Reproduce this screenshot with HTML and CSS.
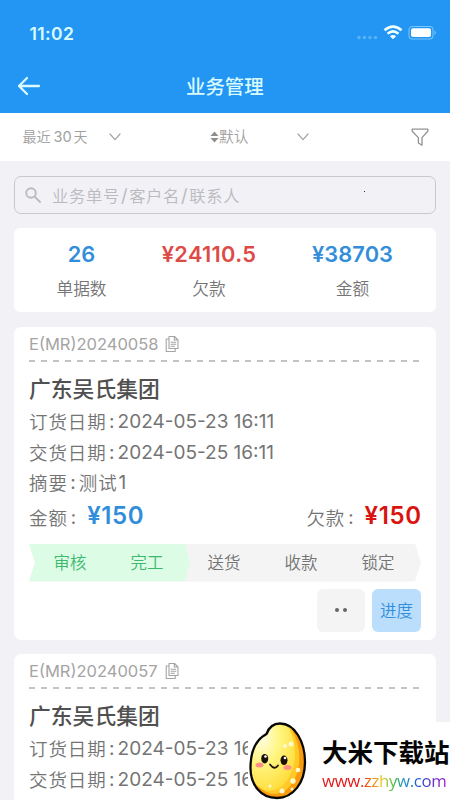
FILE: index.html
```html
<!DOCTYPE html>
<html lang="zh-CN">
<head>
<meta charset="utf-8">
<title>业务管理</title>
<link rel="stylesheet" href="styles.css">
</head>
<body>
<svg class="defs" aria-hidden="true">
  <symbol id="copy" viewBox="0 0 14 18"><path d="M4 1.500h5.500L13 5v8.500H4zM9.300 1.700V5H13M4 4H1.200v12.500h9V13.700M6 7.300h4.800M6 9.300h4.800M6 11.300h3.500"/></symbol>
  <symbol id="chevron" viewBox="0 0 12 8"><path d="M1 1l5 5.700L11 1"/></symbol>
</svg>
<header class="header">
  <div class="status">
    <span class="clock">11:02</span>
    <svg class="status-icons" viewBox="0 0 82 18">
      <g class="dots"><circle cx="4" cy="13.500" r="1.700"/><circle cx="9.500" cy="13.500" r="1.700"/><circle cx="15" cy="13.500" r="1.700"/><circle cx="20.500" cy="13.500" r="1.700"/></g>
      <g class="wifi"><path d="M29.500 6.300Q38 -1 46.500 6.300"/><path d="M32.600 9.700Q38 5.100 43.400 9.700"/><path class="solid" d="M35.500 12.300Q38 10.400 40.500 12.300L38 14.800z"/></g>
      <rect class="cell" x="54" y="2.500" width="24" height="12.500" rx="3.500"/><rect class="charge" x="56" y="4.300" width="20" height="8.800" rx="2"/><path class="tip" d="M79.500 6.500q3 2.200 0 4.400z"/>
    </svg>
  </div>
  <div class="titlebar">
    <svg class="back" viewBox="0 0 24 20"><path d="M22 10H2.500M10 2L2 10l8 8"/></svg>
    <h1>业务管理</h1>
  </div>
</header>
<nav class="filters">
  <span class="range">最近<i>30</i>天</span>
  <svg class="chev"><use href="#chevron"/></svg>
  <svg class="sort" viewBox="0 0 10 12"><path d="M5 0l4.500 5h-9zM5 12l4.500-5h-9z"/></svg>
  <span class="default">默认</span>
  <svg class="chev"><use href="#chevron"/></svg>
  <svg class="funnel" viewBox="0 0 18 19"><path d="M1.200 1.200h15.600v2L11 9.600v7.700L7.400 15V9.600L1.200 3.200z"/></svg>
</nav>
<main>
  <div class="search">
    <svg viewBox="0 0 16 16"><circle cx="6" cy="6" r="4.800"/><path d="M9.700 9.700L15 15"/></svg>
    <span>业务单号<i>/</i>客户名<i>/</i>联系人</span>
    <b class="speck"></b>
  </div>
  <section class="stats">
    <div class="stat"><strong>26</strong><span>单据数</span></div>
    <div class="stat owed"><strong>¥24110.5</strong><span>欠款</span></div>
    <div class="stat total"><strong>¥38703</strong><span>金额</span></div>
  </section>
  <article class="card">
    <div class="number">E(MR)20240058<svg><use href="#copy"/></svg></div>
    <div class="divider"></div>
    <h2>广东吴氏集团</h2>
    <p><span>订货日期</span><em>:</em>2024-05-23 16:11</p>
    <p><span>交货日期</span><em>:</em>2024-05-25 16:11</p>
    <p><span>摘要</span><em>:</em><span>测试</span><em class="digit">1</em></p>
    <div class="money"><span class="label">金额</span><em>:</em><strong>¥150</strong><span class="label debt">欠款</span><em>:</em><strong class="red">¥150</strong></div>
    <div class="steps"><div class="done"><span>审核</span><span>完工</span></div><span>送货</span><span>收款</span><span>锁定</span></div>
    <div class="actions"><button class="more"><i></i><i></i></button><button class="progress">进度</button></div>
  </article>
  <article class="card">
    <div class="number">E(MR)20240057<svg><use href="#copy"/></svg></div>
    <div class="divider"></div>
    <h2>广东吴氏集团</h2>
    <p><span>订货日期</span><em>:</em>2024-05-23 16:11</p>
    <p><span>交货日期</span><em>:</em>2024-05-25 16:11</p>
  </article>
</main>
<aside class="watermark">
  <svg class="mascot" viewBox="0 0 58 78">
    <defs><clipPath id="body"><path d="M17.500 12C20 5 25 1.500 31 1.500 46 1.500 56 20 56 40 56 61 44 76 28 76 11 76 1.500 62 1.500 46 1.500 31 6 18 17.500 12z"/></clipPath>
    <radialGradient id="shine" cx="35%" cy="30%" r="75%"><stop offset="0" stop-color="#fffde0"/><stop offset=".45" stop-color="#fff682"/><stop offset="1" stop-color="#ffdc3a"/></radialGradient></defs>
    <g clip-path="url(#body)"><rect width="58" height="78" fill="#f99b0c"/><ellipse cx="23" cy="32" rx="27" ry="40" transform="rotate(-7 23 32)" fill="#ffc927"/><ellipse cx="21" cy="31" rx="25" ry="38" fill="url(#shine)"/>
    <g fill="#fff9ce"><circle cx="36" cy="24" r="2"/><circle cx="42" cy="22" r="2.500"/><circle cx="49" cy="48" r="2.300"/><circle cx="44" cy="59" r="2.700"/><circle cx="33" cy="69" r="2.500"/><circle cx="21" cy="64" r="1.600"/><circle cx="43" cy="67" r="1.500"/></g></g>
    <path class="outline" d="M17.500 12C20 5 25 1.500 31 1.500 46 1.500 56 20 56 40 56 61 44 76 28 76 11 76 1.500 62 1.500 46 1.500 31 6 18 17.500 12z"/>
    <ellipse cx="10.500" cy="43" rx="4" ry="2.500" fill="#ff8f86"/><ellipse cx="38.500" cy="45.500" rx="4" ry="2.500" fill="#ff8f86"/>
    <g class="eyes"><ellipse cx="15.700" cy="36.700" rx="3.500" ry="4.800"/><ellipse cx="35" cy="38.300" rx="3.500" ry="4.800"/></g><g fill="#fff"><circle cx="16.500" cy="34.500" r="1.300"/><circle cx="36" cy="36" r="1.300"/></g>
    <path class="smile" d="M21 42.500q4.500 6 8 1"/>
  </svg>
  <div class="brand"><span>大米下载站</span><span class="site">www.zzhyw.com</span></div>
</aside>
</body>
</html>
```

FILE: styles.css
```css
* { box-sizing: border-box; }
html { height: 800px; overflow: hidden; }
body { margin: 0; width: 450px; height: 800px; overflow: hidden; position: relative; background: #f1f1f6; color: #747474; font-family: Inter, "Noto Sans CJK SC", sans-serif; }
svg { display: block; flex: none; fill: none; stroke-linecap: round; stroke-linejoin: round; }
i, em { font-style: normal; }
h1, h2, p { margin: 0; }
.defs { display: none; }
.header { height: 113px; background: #2396f3; color: #d9fbff; }
.status { height: 61px; padding: 5px 13px 0 29.5px; display: flex; align-items: center; justify-content: space-between; }
.clock { font-size: 17.5px; font-weight: 600; letter-spacing: .4px; }
.status-icons { width: 82px; height: 18px; }
.dots { fill: #58b2f8; }
.wifi path { stroke: #f1ffff; stroke-width: 2.6; stroke-linecap: butt; }
.wifi .solid { fill: #f1ffff; stroke-width: 1; }
.cell { stroke: #75c6fb; stroke-width: 1.1; }
.charge { fill: #fff; }
.tip { fill: #75c6fb; }
.titlebar { height: 50px; padding-left: 17px; display: flex; align-items: center; }
.back { width: 24px; height: 20px; stroke: #d9fbff; stroke-width: 2.3; }
h1 { margin-left: 145px; padding-top: 1px; font-size: 19.4px; line-height: 30px; font-weight: 500; white-space: nowrap; }
.filters { height: 48px; background: #fff; padding-left: 22.5px; display: flex; align-items: center; font-size: 14px; line-height: 20px; color: #a0a0a0; }
.filters span { font-weight: 350; }
.range { width: 86px; white-space: nowrap; }
.range i { margin: 0 2px 0 3px; font-size: 14.5px; font-weight: 400; }
.chev { width: 12px; height: 8px; stroke: #a3a3a3; stroke-width: 1.2; }
.sort { width: 9px; height: 12px; margin-left: 89.5px; fill: #8e8e8e; }
.default { width: 78px; font-size: 14.7px; }
.funnel { width: 18px; height: 19px; margin-left: 102px; stroke: #929292; stroke-width: 1.3; }
main { padding: 15px 14px 0; }
.search { height: 38px; border: 1.5px solid #c8c8cd; border-radius: 7px; padding-left: 10px; display: flex; align-items: center; font-size: 16.3px; color: #bababf; position: relative; }
.search svg { width: 16px; height: 16px; margin-right: 11px; stroke: #bababf; stroke-width: 1.9; }
.search span { margin-top: -1px; letter-spacing: .7px; font-weight: 350; }
.search i { margin: 0 1px; font-weight: 400; font-size: 18px; }
.speck { position: absolute; left: 349px; top: 14px; width: 1px; height: 1px; background: #333; }
.stats { height: 84px; margin-top: 14px; padding: 14px 12px 0; border-radius: 6px; background: #fff; display: grid; grid-template-columns: 111px 144px 143px; }
.stat { display: flex; flex-direction: column; align-items: center; }
.stat strong { font-size: 21.8px; line-height: 25px; font-weight: 600; color: #328edb; }
.stat.owed strong { color: #de4b46; letter-spacing: .3px; }
.stat.total strong { letter-spacing: .1px; }
.stat span { margin-top: 9px; font-size: 16.7px; line-height: 26px; font-weight: 350; }
.card { height: 313px; margin-top: 15px; padding: 0 15px; border-radius: 7px; background: #fff; }
.card + .card { margin-top: 14px; }
.number { height: 33px; padding-top: 1px; display: flex; align-items: center; font-size: 16.5px; color: #a4a4a4; }
.number svg { width: 14px; height: 18px; margin-left: 7px; stroke: #a4a4a4; stroke-width: 1.1; }
.divider { height: 2px; background: repeating-linear-gradient(90deg, #c3c3c3 0 6px, transparent 6px 12px); }
h2 { height: 45px; padding-top: 5px; font-size: 21.8px; line-height: 44px; font-weight: 500; color: #505050; }
p { height: 30.5px; line-height: 30.5px; font-size: 19px; display: flex; align-items: center; white-space: pre; }
p span, .label { font-size: 18.5px; letter-spacing: .9px; font-weight: 350; }
p em { padding: 0 3px 0 2.5px; }
p .digit { padding: 0 1px; }
.money { height: 36px; display: flex; align-items: center; font-size: 18.5px; }
.money em { padding-left: 3px; }
.money strong { margin: -2px 0 0 11px; font-size: 24px; font-weight: 600; letter-spacing: .6px; color: #328edb; }
.money .red { color: #d9140f; margin-right: -.6px; }
.debt { margin-left: auto; }
.steps { height: 38px; margin-top: 9px; display: grid; grid-template-columns: 161px 68px 86px 68px; background: #f4f4f4; font-size: 16.5px; align-items: center; text-align: center; clip-path: polygon(0 0, calc(100% - 6px) 0, 100% 50%, calc(100% - 6px) 100%, 0 100%, 6px 50%); }
.steps span { white-space: nowrap; font-weight: 350; padding-bottom: 1px; }
.done { height: 38px; display: flex; align-items: center; gap: 44px; padding-left: 24.5px; background: #ddfce6; color: #3cb96d; clip-path: polygon(0 0, 156px 0, 161px 50%, 156px 100%, 0 100%); }
.actions { margin-top: 7px; display: flex; justify-content: flex-end; gap: 7px; }
button { border: 0; border-radius: 6px; height: 43px; padding: 0; font: inherit; }
.more { width: 48px; display: flex; align-items: center; justify-content: center; gap: 4px; background: #f4f4f4; }
.more i { width: 4px; height: 4px; border-radius: 50%; background: #666; }
.progress { width: 49px; background: #badefc; color: #318fdd; font-size: 16.5px; font-weight: 350; }
.watermark { position: absolute; left: 248px; top: 722px; width: 202px; height: 78px; overflow: hidden; background: #fff; display: flex; }
.mascot { width: 58px; height: 78px; margin-left: 1px; overflow: visible; }
.outline { stroke: #080808; stroke-width: 2.3; }
.eyes { fill: #181008; }
.smile { stroke: #21150b; stroke-width: 1.8; }
.brand { margin-left: 15px; padding-top: 14px; color: #050505; font-size: 25.5px; line-height: 34px; font-weight: 600; white-space: nowrap; }
.brand span { display: block; }
.brand .site { width: 128px; font-family: "Open Sans", sans-serif; font-size: 16.8px; letter-spacing: -.35px; line-height: 22px; font-weight: 500; background: linear-gradient(90deg, #e31515 0 30%, #f56a13 37%, #e7cb20 47%, #43bd42 56%, #168fd1 65%, #1760d0 74%, #5334ce 84%, #b01cc8); background-clip: text; color: transparent; }
```
